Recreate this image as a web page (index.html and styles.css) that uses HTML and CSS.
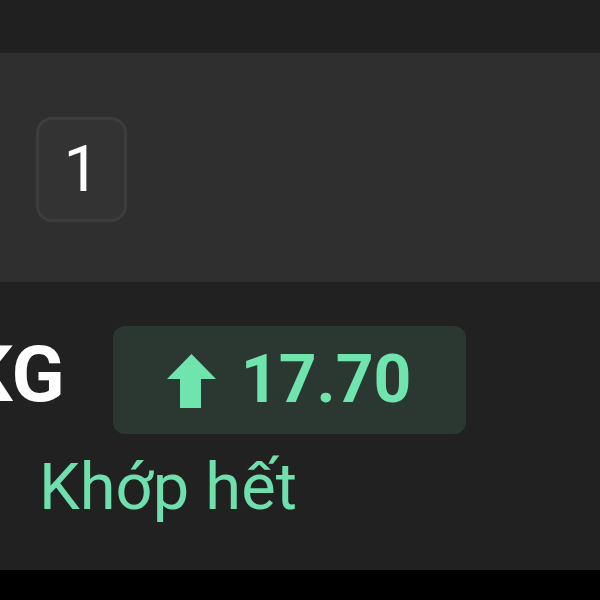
FILE: index.html
```html
<!DOCTYPE html>
<html lang="vi">
<head>
    <meta charset="UTF-8">
    <meta name="viewport" content="width=device-width, initial-scale=1.0">
    <title>Lệnh khớp</title>
    <link rel="stylesheet" href="styles.css">
</head>
<body>

    <div class="top-bar"></div>

    <div class="qty-panel">
        <div class="qty-box">1</div>
    </div>

    <div class="order-row">
        <div class="order-line">
            <span class="ticker">KG</span>
            <div class="price-badge">
                <svg class="arrow" width="50" height="55" viewBox="0 0 50 55">
                    <polygon points="24.5,0 49,25 34,25 34,54 13,54 13,25 0,25" fill="#6fe4ac"/>
                </svg>
                <span class="price">17.70</span>
            </div>
        </div>
        <div class="status">Khớp hết</div>
    </div>

    <div class="bottom-bar"></div>

</body>
</html>
```

FILE: styles.css
```css
body {
    margin: 0;
    width: 600px;
    height: 600px;
    overflow: hidden;
    background: #212121;
    font-family: Roboto, "Liberation Sans", sans-serif;
}

.top-bar {
    height: 53px;
    background: #202020;
}

.qty-panel {
    height: 229px;
    background: #2f2f2f;
    display: flex;
    align-items: center;
    padding-left: 36px;
}

.qty-box {
    width: 85px;
    height: 99px;
    border: 3px solid #3d3d3d;
    border-radius: 16px;
    background: #333333;
    color: #ffffff;
    font-size: 64px;
    display: flex;
    align-items: center;
    justify-content: center;
    margin-top: 4px;
}

.order-row {
    height: 288px;
    padding-top: 44px;
    box-sizing: border-box;
}

.order-line {
    display: flex;
    align-items: center;
}

.ticker {
    color: #ffffff;
    font-size: 78px;
    font-weight: bold;
    line-height: 1;
    margin-left: -37px;
    margin-right: 48px;
    margin-bottom: 10px;
}

.price-badge {
    width: 353px;
    height: 108px;
    background: #2b3832;
    border-radius: 12px;
    display: flex;
    align-items: center;
    justify-content: center;
    gap: 24px;
}

.arrow {
    margin-top: 2px;
}

.price {
    color: #6fe4ac;
    font-size: 66px;
    font-weight: bold;
    line-height: 1;
}

.status {
    color: #6fe0ad;
    font-size: 65px;
    line-height: 1;
    margin-top: 21px;
    margin-left: 39px;
}

.bottom-bar {
    height: 30px;
    background: #000000;
}
```
